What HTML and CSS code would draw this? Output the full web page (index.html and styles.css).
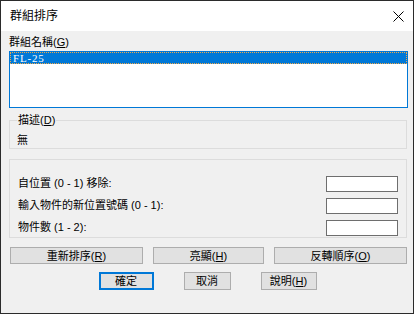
FILE: index.html
```html
<!DOCTYPE html>
<html lang="zh-Hant">
<head>
    <meta charset="UTF-8">
    <title>群組排序</title>
    <link rel="stylesheet" href="styles.css">
</head>
<body>
<div class="window">
    <div class="titlebar">
        <span class="title">群組排序</span>
        <svg class="close" width="11" height="11" viewBox="0 0 11 11">
            <path d="M0.5 0.5 L10.5 10.5 M10.5 0.5 L0.5 10.5" stroke="#000" stroke-width="1" fill="none"/>
        </svg>
    </div>
    <div class="content">
        <div class="label">群組名稱(<u>G</u>)</div>
        <div class="listbox">
            <div class="item selected">FL-25</div>
        </div>

        <fieldset class="group desc">
            <legend>描述(<u>D</u>)</legend>
            <div class="desc-text">無</div>
        </fieldset>

        <fieldset class="group positions">
            <div class="row">
                <span>自位置 (0 - 1) 移除:</span>
                <input type="text" class="field">
            </div>
            <div class="row">
                <span>輸入物件的新位置號碼 (0 - 1):</span>
                <input type="text" class="field">
            </div>
            <div class="row">
                <span>物件數 (1 - 2):</span>
                <input type="text" class="field">
            </div>
        </fieldset>

        <div class="actions">
            <button class="btn wide">重新排序(<u>R</u>)</button>
            <button class="btn mid">亮顯(<u>H</u>)</button>
            <button class="btn wide">反轉順序(<u>O</u>)</button>
        </div>
        <div class="dialog-buttons">
            <button class="btn default ok">確定</button>
            <button class="btn cancel">取消</button>
            <button class="btn help">說明(<u>H</u>)</button>
        </div>
    </div>
</div>
</body>
</html>
```

FILE: styles.css
```css
* {
    box-sizing: border-box;
}

body {
    margin: 0;
    background-color: #f0f0f0;
}

.window {
    width: 414px;
    height: 314px;
    border: 1px solid #2b2b2b;
    background-color: #f0f0f0;
    font-family: "Liberation Sans", "Noto Sans CJK TC", sans-serif;
    font-size: 11px;
    color: #000;
}

.titlebar {
    height: 30px;
    background-color: #fff;
    display: flex;
    align-items: center;
    justify-content: space-between;
    padding: 0 9px 0 9px;
}

.title {
    font-size: 12px;
    line-height: 14px;
}

.content {
    padding: 3px 5px 0 8px;
}

.label {
    line-height: 16px;
    height: 17px;
}

u {
    text-decoration: underline;
    text-underline-offset: 1px;
}

.listbox {
    height: 57px;
    border: 1px solid #0078d7;
    background-color: #fff;
}

.item {
    height: 12px;
    line-height: 11px;
    padding-left: 2px;
    font-family: "Liberation Serif", serif;
    font-size: 11px;
    letter-spacing: 0.8px;
}

.selected {
    background-color: #0078d7;
    color: #fff;
    border: 1px dotted #f0a848;
}

.group {
    margin: 0;
    border: 1px solid #dcdcdc;
    width: 398px;
    padding: 0;
}

.desc {
    margin-top: 5px;
    padding: 0 8px 1px 7px;
}

.desc legend {
    padding: 0 1px;
    line-height: 14px;
}

.desc-text {
    line-height: 14px;
    margin-top: 6px;
}

.positions {
    margin-top: 10px;
    padding: 16px 8px 1px 8px;
    display: flex;
    flex-direction: column;
    gap: 6px;
}

.row {
    display: flex;
    align-items: center;
    justify-content: space-between;
    height: 16px;
}

.row span {
    line-height: 14px;
    margin-top: -3px;
}

.field {
    width: 72px;
    height: 16px;
    border: 1px solid #6e6e6e;
    background-color: #fff;
    padding: 0;
    margin: 0;
}

.actions {
    display: flex;
    gap: 10px;
    margin-top: 9px;
    padding-left: 1px;
}

.btn {
    font-family: inherit;
    font-size: 11px;
    line-height: 14px;
    background-color: #e1e1e1;
    border: 1px solid #adadad;
    color: #000;
    padding: 0;
    margin: 0;
    height: 17px;
}

.wide {
    width: 133px;
}

.mid {
    width: 111px;
}

.dialog-buttons {
    display: flex;
    justify-content: center;
    gap: 30px;
    margin-top: 8px;
    padding-right: 2px;
}

.dialog-buttons .btn {
    height: 18px;
}

.default {
    border: 2px solid #0078d7;
}

.ok {
    width: 55px;
}

.cancel {
    width: 47px;
}

.help {
    width: 56px;
}
```
